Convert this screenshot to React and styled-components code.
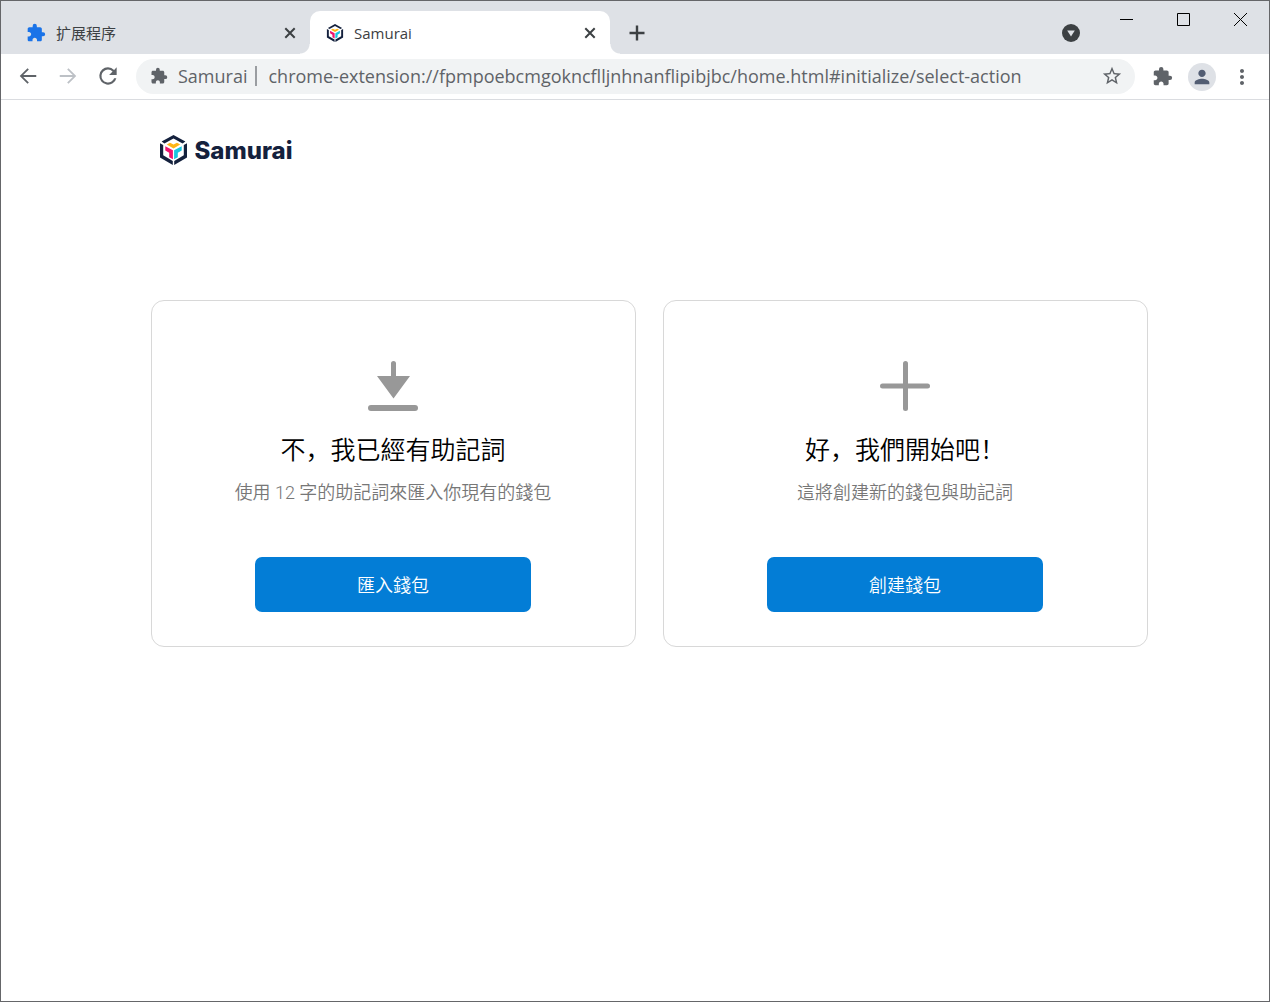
import React from "react";
import styled, { createGlobalStyle } from "styled-components";

const latin = '"Open Sans", "Noto Sans", "Noto Sans CJK SC", sans-serif';

const GlobalStyle = createGlobalStyle`
  * { box-sizing: border-box; }
  body { margin: 0; background: #fff; font-family: ${latin}; }
  button { font: inherit; border: 0; padding: 0; background: none; cursor: pointer; }
  svg { display: block; flex: none; }
`;

const Window = styled.div`
  min-height: 100vh;
  display: flex;
  flex-direction: column;
  border: 1px solid #656669;
  background: #fff;
`;

const TabStrip = styled.header`
  display: flex;
  align-items: stretch;
  height: 53px;
  padding-top: 10px;
  background: #dee1e6;
`;

const Tab = styled.div`
  position: relative;
  display: flex;
  align-items: center;
  width: ${(p) => (p.$active ? 300 : 309)}px;
  padding: 0 13px 0 ${(p) => (p.$active ? 16 : 25)}px;
  border-radius: 10px 10px 0 0;
  background: ${(p) => (p.$active ? "#fff" : "transparent")};
  color: #3c4043;
  font-size: 15px;
  line-height: 20px;

  &::before,
  &::after {
    content: "";
    display: ${(p) => (p.$active ? "block" : "none")};
    position: absolute;
    bottom: 0;
    width: 10px;
    height: 10px;
  }
  &::before {
    left: -10px;
    background: radial-gradient(circle at 0 0, transparent 9px, #fff 10px);
  }
  &::after {
    right: -10px;
    background: radial-gradient(circle at 100% 0, transparent 9px, #fff 10px);
  }
`;

const TabTitle = styled.span`
  flex: 1;
  padding-left: 10px;
`;

const IconButton = styled.button`
  display: flex;
  align-items: center;
  justify-content: center;
  width: 28px;
  height: 28px;
  border-radius: 50%;
  color: ${(p) => p.$color || "#5f6368"};
  background: ${(p) => p.$fill || "none"};
`;

const TabClose = styled(IconButton)`
  width: 14px;
  height: 14px;
`;

const NewTab = styled(IconButton)`
  align-self: center;
  margin-left: 13px;
`;

const StripEnd = styled.div`
  display: flex;
  flex: 1;
  justify-content: flex-end;
`;

const TabSearch = styled(IconButton)`
  align-self: center;
  margin-right: 13px;
`;

const WindowControl = styled.button`
  display: flex;
  align-items: center;
  justify-content: center;
  width: 57px;
  height: 17px;
  color: #000;
`;

const Toolbar = styled.nav`
  display: flex;
  align-items: center;
  height: 46px;
  padding: 0 13px;
  border-bottom: 1px solid #dadce0;
`;

const NavButtons = styled.div`
  display: flex;
  gap: 12px;
  padding: 0 14px 2px 0;
`;

const AddressBar = styled.label`
  display: flex;
  flex: 1;
  align-items: center;
  height: 35px;
  padding: 0 9px 2px 14px;
  border-radius: 18px;
  background: #f1f3f4;
  color: #5f6368;
  font-size: 18px;
  line-height: 24px;
`;

const SiteName = styled.span`
  padding: 0 8px 0 10px;
`;

const Divider = styled.span`
  width: 2px;
  height: 20px;
  margin-right: 11px;
  background: #9a9da1;
`;

const AddressInput = styled.input`
  flex: 1;
  min-width: 0;
  padding: 0;
  border: 0;
  outline: 0;
  background: none;
  color: inherit;
  font: inherit;
`;

const ToolbarActions = styled.div`
  display: flex;
  align-items: center;
  gap: 12px;
  padding-left: 13px;
`;

const Page = styled.main`
  width: 100%;
  max-width: 1025px;
  margin: 0 auto;
  padding: 34px 0 40px 28px;
  font-family: Roboto, "Noto Sans CJK SC", sans-serif;
`;

const Brand = styled.h1`
  display: flex;
  align-items: center;
  gap: 8px;
  height: 32px;
  margin: 0 0 134px;
  padding-left: 9px;
  color: #14213d;
  font-family: Inter, "Open Sans", sans-serif;
  font-size: 24px;
  font-weight: 800;
`;

const Choices = styled.div`
  display: grid;
  grid-template-columns: repeat(auto-fit, minmax(360px, 1fr));
  gap: 27px;
`;

const Card = styled.section`
  display: flex;
  flex-direction: column;
  align-items: center;
  padding: 60px 20px 34px;
  border: 1px solid #d8d8d8;
  border-radius: 13px;
  text-align: center;
`;

const CardTitle = styled.h2`
  margin: 22px 0 0;
  color: #000;
  font-size: 25px;
  font-weight: 350;
  line-height: 36px;
`;

const CardText = styled.p`
  margin: 10px 0 50px;
  color: #777;
  font-size: 18px;
  font-weight: 350;
  line-height: 28px;
`;

const PrimaryButton = styled.button`
  width: 276px;
  height: 55px;
  padding-bottom: 2px;
  border-radius: 7px;
  background: #037dd6;
  color: #fff;
  font-size: 18px;
  font-weight: 350;
`;

const Puzzle = ({ size = 20, color = "currentColor" }) => (
  <svg width={size} height={size} viewBox="0 0 24 24" fill={color} aria-hidden="true">
    <path d="M20.5 11H19V7c0-1.1-.9-2-2-2h-4V3.500a2.500 2.500 0 0 0-5 0V5H4c-1.100 0-1.990.9-1.990 2v3.800H3.500c1.490 0 2.700 1.210 2.700 2.700s-1.210 2.700-2.700 2.700H2V20c0 1.100.9 2 2 2h3.800v-1.500c0-1.490 1.210-2.700 2.700-2.700s2.700 1.210 2.700 2.700V22H17c1.100 0 2-.9 2-2v-4h1.500a2.500 2.500 0 0 0 0-5z" />
  </svg>
);

const Cube = ({ width, height }) => (
  <svg width={width} height={height} viewBox="0 0 27 30" aria-hidden="true">
    <g fill="#14213d">
      <path d="M13.500 0 25.400 6.600 22.600 8.500 13.500 3.500 4.400 8.500 1.600 6.600z" />
      <path d="M0 8.200 3.200 10V20.300L12.800 26V30L0 22.500z" />
      <path d="M27 8.200 23.800 10V20.300L14.200 26V30L27 22.500z" />
    </g>
    <path fill="#ffb515" d="M6.800 9.600 10 7.800 13.500 9.500 17 7.800 20.200 9.600 13.500 13.500z" />
    <path fill="#f0146e" d="M5.300 11.300 12.900 15.300V24.200L9.200 22.200V17.800L5.300 15.600z" />
    <path fill="#18c5e0" d="M21.700 11.300 14.100 15.300V24.200L17.800 22.200V17.800L21.700 15.600z" />
  </svg>
);

const CloseIcon = () => (
  <svg width="12" height="12" viewBox="0 0 12 12" stroke="#3c4043" strokeWidth="2" aria-hidden="true">
    <path d="M1.300 1.300 10.700 10.700M10.700 1.300 1.300 10.700" />
  </svg>
);

const Material = ({ d, size = 22 }) => (
  <svg width={size} height={size} viewBox="0 0 24 24" fill="currentColor" aria-hidden="true">
    <path d={d} />
  </svg>
);

const arrowBack = "M21 11H6.830l6.090-6.090L11.500 3.500 3 12l8.500 8.500 1.410-1.410L6.830 13H21v-2z";
const arrowForward = "M12.500 3.500l-1.410 1.410L17.170 11H3v2h14.170l-6.080 6.090 1.410 1.410L21 12z";
const refresh =
  "M17.650 6.350A7.960 7.960 0 0 0 12 4a8 8 0 1 0 7.730 10h-2.080A6 6 0 1 1 12 6c1.660 0 3.140.69 4.220 1.780L13 11h7V4l-2.350 2.350z";
const star =
  "M22 9.240l-7.190-.62L12 2 9.190 8.630 2 9.240l5.460 4.730L5.820 21 12 17.270 18.180 21l-1.630-7.030L22 9.240zM12 15.400l-3.760 2.270 1-4.280-3.320-2.880 4.380-.38L12 6.100l1.710 4.040 4.380.38-3.320 2.880 1 4.280L12 15.400z";
const person =
  "M12 12c2.210 0 4-1.790 4-4s-1.790-4-4-4-4 1.790-4 4 1.790 4 4 4zm0 2c-2.670 0-8 1.340-8 4v2h16v-2c0-2.660-5.330-4-8-4z";
const more =
  "M12 8c1.100 0 2-.9 2-2s-.9-2-2-2-2 .9-2 2 .9 2 2 2zm0 2c-1.100 0-2 .9-2 2s.9 2 2 2 2-.9 2-2-.9-2-2-2zm0 6c-1.100 0-2 .9-2 2s.9 2 2 2 2-.9 2-2-.9-2-2-2z";

const ImportIcon = () => (
  <svg width="50" height="50" viewBox="0 0 50 50" fill="#989898" aria-hidden="true">
    <path d="M23 2.500a2.500 2.500 0 0 1 5 0V15H42L25.500 37.500 9 15H23z" />
    <rect y="44" width="50" height="6" rx="3" />
  </svg>
);

const PlusIcon = () => (
  <svg width="50" height="50" viewBox="0 0 50 50" fill="#989898" aria-hidden="true">
    <rect x="23" width="5" height="50" rx="2.500" />
    <rect y="22.500" width="50" height="5" rx="2.500" />
  </svg>
);

const choices = [
  { icon: ImportIcon, title: "不，我已經有助記詞", text: "使用 12 字的助記詞來匯入你現有的錢包", action: "匯入錢包" },
  { icon: PlusIcon, title: "好，我們開始吧！", text: "這將創建新的錢包與助記詞", action: "創建錢包" },
];

export default function App() {
  return (
    <>
      <GlobalStyle />
      <Window>
        <TabStrip>
          <Tab>
            <Puzzle color="#1a73e8" />
            <TabTitle>扩展程序</TabTitle>
            <TabClose aria-label="Close tab"><CloseIcon /></TabClose>
          </Tab>
          <Tab $active>
            <Cube width={18} height={18} />
            <TabTitle>Samurai</TabTitle>
            <TabClose aria-label="Close tab"><CloseIcon /></TabClose>
          </Tab>
          <NewTab aria-label="New tab">
            <svg width="16" height="16" viewBox="0 0 16 16" stroke="#3c4043" strokeWidth="2.400" aria-hidden="true">
              <path d="M8 .5v15M.5 8h15" />
            </svg>
          </NewTab>
          <StripEnd>
            <TabSearch aria-label="Search tabs">
              <svg width="18" height="18" viewBox="0 0 18 18" aria-hidden="true">
                <circle cx="9" cy="9" r="9" fill="#3c4043" />
                <path d="M5.200 6.500h7.600L9 12.500z" fill="#dee1e6" />
              </svg>
            </TabSearch>
            <WindowControl aria-label="Minimize">
              <svg width="13" height="13"><path d="M0 6.500h13" stroke="currentColor" /></svg>
            </WindowControl>
            <WindowControl aria-label="Maximize">
              <svg width="13" height="13"><path d="M.5.5h12v12H.5z" fill="none" stroke="currentColor" /></svg>
            </WindowControl>
            <WindowControl aria-label="Close">
              <svg width="13" height="13"><path d="M0 0l13 13M13 0L0 13" stroke="currentColor" /></svg>
            </WindowControl>
          </StripEnd>
        </TabStrip>

        <Toolbar>
          <NavButtons>
            <IconButton aria-label="Back"><Material d={arrowBack} /></IconButton>
            <IconButton aria-label="Forward" $color="#bdc1c6"><Material d={arrowForward} /></IconButton>
            <IconButton aria-label="Reload"><Material d={refresh} size={26} /></IconButton>
          </NavButtons>
          <AddressBar>
            <Puzzle size={18} />
            <SiteName>Samurai</SiteName>
            <Divider />
            <AddressInput
              aria-label="Address"
              defaultValue="chrome-extension://fpmpoebcmgokncflljnhnanflipibjbc/home.html#initialize/select-action"
            />
            <IconButton type="button" aria-label="Bookmark this page"><Material d={star} /></IconButton>
          </AddressBar>
          <ToolbarActions>
            <IconButton aria-label="Extensions"><Puzzle size={21} /></IconButton>
            <IconButton aria-label="Profile" $fill="#dee1e6" $color="#525d73"><Material d={person} /></IconButton>
            <IconButton aria-label="Menu"><Material d={more} size={24} /></IconButton>
          </ToolbarActions>
        </Toolbar>

        <Page>
          <Brand>
            <Cube width={27} height={30} />
            Samurai
          </Brand>
          <Choices>
            {choices.map(({ icon: Icon, title, text, action }) => (
              <Card key={title}>
                <Icon />
                <CardTitle>{title}</CardTitle>
                <CardText>{text}</CardText>
                <PrimaryButton>{action}</PrimaryButton>
              </Card>
            ))}
          </Choices>
        </Page>
      </Window>
    </>
  );
}
